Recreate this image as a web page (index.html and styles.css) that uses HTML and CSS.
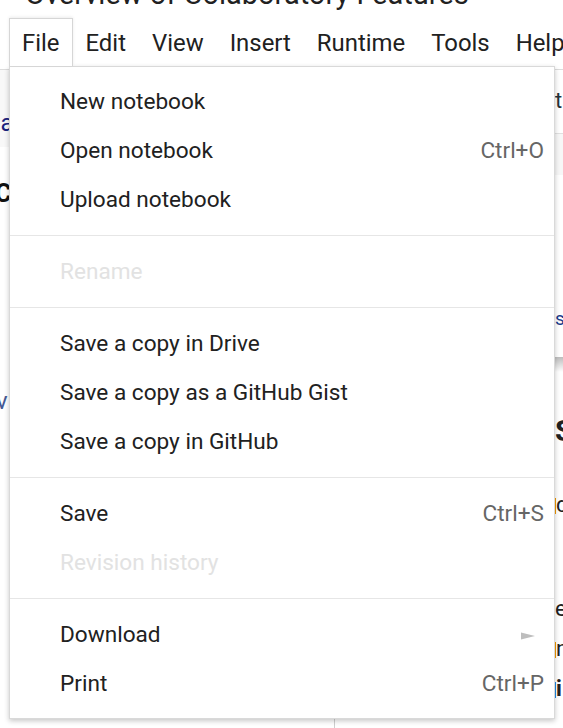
FILE: index.html
```html
<!DOCTYPE html>
<html lang="en">
<head>
<meta charset="utf-8">
<title>Overview of Colaboratory Features</title>
<link rel="stylesheet" href="styles.css">
</head>
<body>
<header class="doc-header">
  <h1 class="title">Overview of Colaboratory Features</h1>
  <nav class="menubar">
    <span class="menubar-item is-open">File</span>
    <span class="menubar-item">Edit</span>
    <span class="menubar-item">View</span>
    <span class="menubar-item">Insert</span>
    <span class="menubar-item">Runtime</span>
    <span class="menubar-item">Tools</span>
    <span class="menubar-item">Help</span>
  </nav>
</header>

<main class="workspace">
  <section class="left-pane">
    <div class="toc-head">
      <span class="toc-line toc-a">Tabl<span class="cursor">a</span></span>
    </div>
    <div class="toc-line toc-c">C</div>
    <div class="toc-line toc-v">v</div>
  </section>
  <section class="right-pane">
    <div class="cell-toolbar"><span class="frag frag-t">t</span></div>
    <div class="cell-band"></div>
    <div class="cell-body"><span class="frag frag-s">s</span></div>
    <div class="cell-shadow"></div>
    <div class="frag frag-big">S</div>
    <div class="frag frag-d"><span class="mark-orange"></span>d</div>
    <div class="frag frag-e">e</div>
    <div class="frag frag-n"><span class="mark-orange"></span>n</div>
    <div class="frag frag-i"><span class="mark-blue"></span>i</div>
  </section>
</main>

<div class="menu" role="menu">
  <div class="menu-group">
    <div class="menu-item"><span>New notebook</span></div>
    <div class="menu-item"><span>Open notebook</span><span class="shortcut">Ctrl+O</span></div>
    <div class="menu-item"><span>Upload notebook</span></div>
  </div>
  <div class="menu-sep"></div>
  <div class="menu-group">
    <div class="menu-item is-disabled"><span>Rename</span></div>
  </div>
  <div class="menu-sep"></div>
  <div class="menu-group">
    <div class="menu-item"><span>Save a copy in Drive</span></div>
    <div class="menu-item"><span>Save a copy as a GitHub Gist</span></div>
    <div class="menu-item"><span>Save a copy in GitHub</span></div>
  </div>
  <div class="menu-sep"></div>
  <div class="menu-group">
    <div class="menu-item"><span>Save</span><span class="shortcut">Ctrl+S</span></div>
    <div class="menu-item is-disabled"><span>Revision history</span></div>
  </div>
  <div class="menu-sep"></div>
  <div class="menu-group">
    <div class="menu-item"><span>Download</span>
      <svg class="submenu-arrow" width="14" height="8" viewBox="0 0 14 8"><polygon points="0,0.5 14,4 0,7.5" fill="#bdbdbd"/></svg>
    </div>
    <div class="menu-item"><span>Print</span><span class="shortcut">Ctrl+P</span></div>
  </div>
</div>
</body>
</html>
```

FILE: styles.css
```css
* { box-sizing: border-box; }

html, body {
  margin: 0;
  padding: 0;
  background: #ffffff;
  overflow: hidden;
}

body {
  width: 563px;
  height: 728px;
  font-family: Roboto, "Liberation Sans", Arial, sans-serif;
  color: #212121;
  position: relative;
}

.doc-header {
  display: flow-root;
  border-bottom: 1px solid #dcdcdc;
  height: 70px;
}

.title {
  margin: -23px 0 0 25px;
  font-size: 29px;
  line-height: 34px;
  font-weight: 400;
  color: #212121;
  white-space: nowrap;
}

.menubar {
  display: flex;
  margin-top: 7px;
  padding-left: 9px;
  height: 48px;
  white-space: nowrap;
}

.menubar-item {
  padding: 0 12px;
  height: 48px;
  line-height: 48px;
  font-size: 23.9px;
  color: #212121;
  border: 1px solid transparent;
  border-bottom: none;
}

.menubar-item.is-open {
  background: #ffffff;
  border-color: #d6d6d6;
  box-shadow: 0 -1px 3px rgba(0,0,0,0.08);
  position: relative;
  z-index: 3;
}

/* background workspace */
.workspace {
  display: grid;
  grid-template-columns: 335px 1fr;
  height: 658px;
}

.left-pane {
  border-right: 1px solid #cfcfcf;
  overflow: hidden;
}

.toc-head {
  height: 77px;
  background: #f8f8f8;
  padding-top: 41px;
}

.toc-line {
  display: block;
  white-space: nowrap;
  font-size: 24px;
  line-height: 24px;
}

.toc-a {
  margin-left: -45px;
  color: #1a237e;
}

.cursor {
  border-right: 2px solid #f29900;
}

.toc-c {
  margin: 35px 0 0 -5px;
  font-size: 25px;
  font-weight: 700;
  color: #111;
}

.toc-v {
  margin: 183px 0 0 -4px;
  color: #455a94;
}

.right-pane {
  overflow: hidden;
  padding-left: 221px;
  margin-left: -1px;
  display: flex;
  flex-direction: column;
  align-items: stretch;
}

.right-pane > .cell-toolbar,
.right-pane > .cell-band,
.right-pane > .cell-body,
.right-pane > .cell-shadow {
  margin-left: -221px;
  padding-left: 221px;
}

.cell-toolbar {
  height: 64px;
  flex: none;
  padding-top: 20px;
  border-bottom: 1px solid #e0e0e0;
}

.cell-band {
  height: 41px;
  flex: none;
  background: #f7f7f7;
}

.cell-body {
  height: 182px;
  flex: none;
  padding-top: 134px;
}

.cell-shadow {
  height: 15px;
  flex: none;
  background: linear-gradient(#bdbdbd, rgba(255,255,255,0));
}

.frag {
  display: block;
  flex: none;
  font-size: 22px;
  line-height: 22px;
  color: #212121;
  white-space: nowrap;
}

.frag-t { color: #263238; }

.frag-s {
  font-size: 19px;
  line-height: 19px;
  color: #1a3a8a;
}

.frag-big {
  margin-top: 44px;
  font-size: 30px;
  line-height: 30px;
  font-weight: 700;
}

.frag-d { margin-top: 48px; }
.frag-e { margin-top: 82px; }
.frag-n { margin-top: 18px; }
.frag-i { margin-top: 18px; font-weight: 700; }

.mark-orange, .mark-blue {
  display: inline-block;
  width: 1px;
  height: 16px;
  vertical-align: -2px;
}
.mark-orange { background: #f29900; }
.mark-blue { background: #1e88e5; }

/* dropdown menu */
.menu {
  position: absolute;
  top: 66px;
  left: 9px;
  width: 546px;
  background: #ffffff;
  border: 1px solid #d9d9d9;
  box-shadow: 0 2px 5px rgba(0,0,0,0.22);
  z-index: 2;
  padding: 0;
}

.menu-group {
  padding: 11px 0;
}

.menu-group:first-child { padding-top: 10px; }
.menu-group:last-child { padding-bottom: 10px; }

.menu-sep {
  height: 1px;
  background: #e6e6e6;
}

.menu-item {
  display: flex;
  align-items: center;
  justify-content: space-between;
  height: 49px;
  padding: 0 10px 0 50px;
  font-size: 22.6px;
  color: #212121;
  white-space: nowrap;
}

.menu-item.is-disabled { color: #e2e2e2; }

.shortcut { color: #666666; }

.submenu-arrow {
  margin-right: 9px;
  margin-top: 3px;
}
```
